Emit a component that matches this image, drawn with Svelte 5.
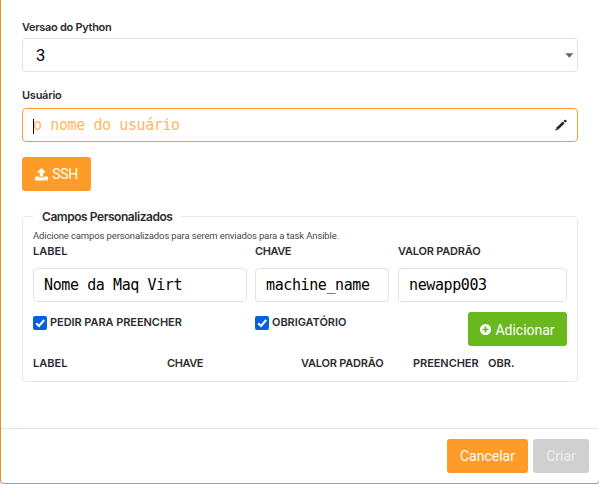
<script>
  let version = $state('3');
  let user = $state('');
  let label = $state('Nome da Maq Virt');
  let key = $state('machine_name');
  let value = $state('newapp003');
  let ask = $state(true);
  let required = $state(true);
</script>

{#snippet check()}
  <svg class="tick" viewBox="0 0 14 14"><path d="M3.2 7.2 6 10l5.2-6" fill="none" stroke="#fff" stroke-width="2" /></svg>
{/snippet}

<div class="modal">
  <form class="body">
    <label class="caption" for="version"><span>Versao do Python</span></label>
    <div class="box select" id="version">
      <span class="number">{version}</span>
      <svg width="9" height="5" viewBox="0 0 9 5"><path d="M0.3 0.3h8L4.3 4.8z" fill="#666" /></svg>
    </div>

    <label class="caption user" for="user"><span>Usuário</span></label>
    <div class="box focus">
      <span class="caret"></span>
      <input id="user" bind:value={user} placeholder="o nome do usuário" />
      <svg class="pencil" width="12" height="12" viewBox="0 0 12 12" fill="#24242c">
        <path d="M0.2 11.6 1 8.9 7.8 2.6 9.700 4.3 3.1 10.8zM8.5 1.900 9.4 1.1Q10.2.4 10.9 1L11.5 1.6Q12 2.2 11.4 2.800L10.5 3.6z" />
        <path d="M1.3 9.2 2.6 10.5" stroke="#fff" stroke-width="0.7" />
      </svg>
    </div>

    <button type="button" class="btn ssh">
      <svg width="13" height="13" viewBox="0 0 13 13" fill="#fff">
        <path d="M6.5 0 11 4.6H8.2V8.6H4.8V4.6H2z" />
        <path fill-rule="evenodd" d="M.5 8.5H4V9.5H9V8.5h3.5q.5 0 .5.5v3q0 .5-.5.5H.5Q0 12.500 0 12V9q0-.5.5-.5M9 10.700v.9h1v-.9zM11 10.700v.9h1v-.9z" />
      </svg>
      <span>SSH</span>
    </button>

    <fieldset>
      <legend><span>Campos Personalizados</span></legend>
      <p>Adicione campos personalizados para serem enviados para a task Ansible.</p>
      <div class="grid">
        <div class="field"><b>LABEL</b><div class="box"><input bind:value={label} /></div></div>
        <div class="field"><b class="t-chave">CHAVE</b><div class="box"><input bind:value={key} /></div></div>
        <div class="field"><b class="t-valor">VALOR PADRÃO</b><div class="box"><input bind:value /></div></div>
        <button type="button" class="toggle" class:on={ask} onclick={() => (ask = !ask)}>
          <i>{#if ask}{@render check()}{/if}</i><b class="t-pedir">PEDIR PARA PREENCHER</b>
        </button>
        <button type="button" class="toggle" class:on={required} onclick={() => (required = !required)}>
          <i>{#if required}{@render check()}{/if}</i><b class="t-pedir">OBRIGATÓRIO</b>
        </button>
        <button type="button" class="btn add">
          <svg width="11" height="11" viewBox="0 0 11 11"><circle cx="5.500" cy="5.500" r="5.500" fill="#fff" /><path d="M5.500 2.500v6M2.500 5.500h6" stroke="#69b81e" stroke-width="1.700" /></svg>
          <span>Adicionar</span>
        </button>
      </div>
      <div class="head">
        <b>LABEL</b><b class="t-chave">CHAVE</b><b class="t-valor">VALOR PADRÃO</b><b class="t-pedir">PREENCHER</b><b>OBR.</b>
      </div>
    </fieldset>
  </form>
  <footer>
    <button type="button" class="btn cancel"><span>Cancelar</span></button>
    <button type="button" class="btn create" disabled><span>Criar</span></button>
  </footer>
</div>

<style>
  :global(body) { overflow: hidden; background: #fff; }
  .modal, .modal * { box-sizing: border-box; }
  .modal {
    width: 600px; height: 484px; display: flex; flex-direction: column;
    border: 1px solid #e8912a; border-top: 0; border-radius: 0 0 4px 4px;
    font-family: Inter, sans-serif; color: #2c2c30; background: #fff;
  }
  .body { flex: 1; padding: 19px 21px 0; }
  b, .caption { font-size: 11px; font-weight: 600; line-height: 14px; white-space: nowrap; }
  .caption { display: block; height: 19px; line-height: 16px; letter-spacing: -.25px; }
  .caption:first-child { letter-spacing: -.3px; }
  .user { margin-top: 15px; height: 21px; }
  .t-chave { letter-spacing: -.45px; }
  .t-valor { letter-spacing: -.2px; }
  .t-pedir { letter-spacing: -.06px; }
  .box {
    display: flex; align-items: center; height: 34px; border: 1px solid #e3e3e5;
    border-radius: 4px; padding: 0 10px; background: #fff; position: relative;
  }
  .body > .box { width: 556px; }
  .select { justify-content: space-between; padding: 0 3px 0 13px; }
  .number { font: 16.5px Roboto, sans-serif; color: #000; }
  .focus { border-color: #ff9c2a; }
  .caret { position: absolute; left: 10px; top: 10px; width: 1px; height: 15px; background: #000; }
  input {
    flex: 1; min-width: 0; border: 0; outline: 0; padding: 0; background: none; color: #000;
    font: 15px "DejaVu Sans Mono", monospace; letter-spacing: -.4px; height: 28px;
  }
  input::placeholder { color: #ffb760; opacity: 1; }
  .btn {
    display: flex; align-items: center; justify-content: center; gap: 4px; height: 34px;
    border: 0; border-radius: 3px; padding: 0; background: #ff9c29; color: #fff;
    font: 14px/18px Roboto, sans-serif;
  }
  .ssh { width: 69px; margin-top: 15px; }
  .ssh span { letter-spacing: -.3px; }
  .add span { padding-top: 1px; }
  fieldset {
    margin: 17px 0 0; width: 556px; height: 174px; border: 1px solid #e8e8ea;
    border-radius: 4px; padding: 0 10px; min-width: 0;
  }
  legend { padding: 0 8px 0 9px; height: 16px; line-height: 18px; font-size: 12px; font-weight: 600; letter-spacing: -.45px; }
  p { margin: 6px 0 0; font: 9.5px/12px Roboto, sans-serif; letter-spacing: -.135px; color: #484848; white-space: nowrap; }
  .grid { display: grid; grid-template-columns: 214px 134px 169px; column-gap: 8px; row-gap: 10px; margin-top: 2px; }
  .grid > :nth-child(3n) { margin-left: 1px; width: 169px; }
  .field { display: flex; flex-direction: column; gap: 10px; }
  .toggle {
    display: flex; align-items: center; gap: 3px; height: 22px; border: 0; padding: 0;
    background: none; color: inherit; font-family: inherit;
  }
  .toggle b { padding-bottom: 2px; }
  .toggle i { width: 14px; height: 14px; border: 1px solid #888; border-radius: 2px; display: flex; }
  .toggle.on i { background: #0860df; border: 0; }
  .tick { width: 14px; height: 14px; }
  .grid > .add { width: 99px; margin-left: 71px; background: #69b81e; }
  .head { display: grid; grid-template-columns: 134px 134px 112px 75px auto; margin-top: 10px; }
  footer {
    height: 55px; border-top: 1px solid #e2e2e4; display: flex; justify-content: flex-end;
    gap: 5px; padding: 10px 10px 0 0;
  }
  .cancel { width: 81px; }
  .create { width: 56px; background: #d0d0d0; color: #eee; }
</style>
